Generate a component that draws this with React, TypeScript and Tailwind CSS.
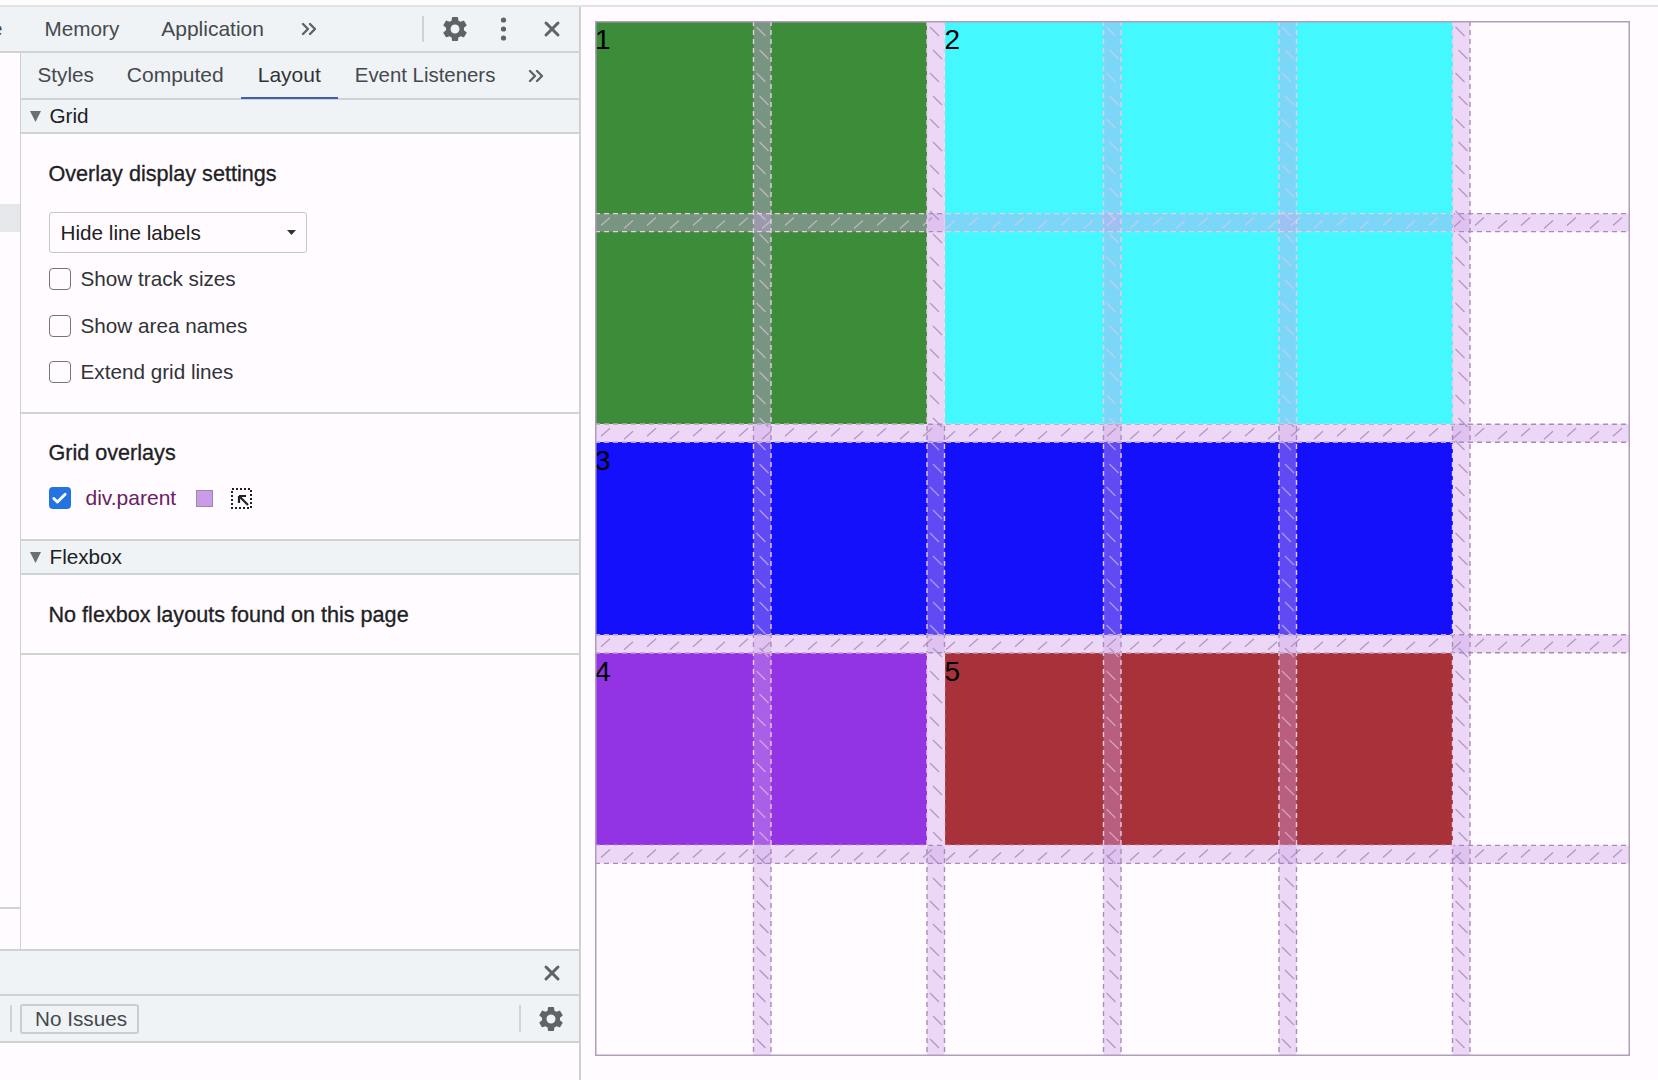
import React from 'react';
import { Check, ChevronsRight, X } from 'lucide-react';
import { MdSettings } from 'react-icons/md';

// track starts measured off the screenshot, the columns aren't quite even
const colGaps = [158.5, 332, 508.5, 684, 857.5];
const GAP_W = 17.5;
const ROW = (1035 - 18 * 4) / 5;
const rowGaps = [1, 2, 3, 4].map((i) => i * ROW + (i - 1) * 18);
const steps = Array.from({ length: 45 }, (_, i) => 6 + i * 23);

// the same rectangles as the grid items below
const itemRects = [
  { x: 0, y: 0, w: 332, h: rowGaps[1] },
  { x: 349.5, y: 0, w: 508, h: rowGaps[1] },
  { x: 0, y: rowGaps[1] + 18, w: 857.5, h: ROW },
  { x: 0, y: rowGaps[2] + 18, w: 332, h: ROW },
  { x: 349.5, y: rowGaps[2] + 18, w: 508, h: ROW },
];

const Marks = ({ color, hatchOpacity }: { color: string; hatchOpacity: number }) => (
  <g stroke={color}>
    <g strokeWidth={1.3} strokeOpacity={hatchOpacity}>
      {colGaps.map((x) =>
        steps.map((s, i) => (
          <line key={`${x}-${s}`} x1={x + (i % 2 ? 6 : 3)} y1={s} x2={x + (i % 2 ? 15 : 12)} y2={s + 9} />
        )),
      )}
      {rowGaps.map((y) =>
        steps.map((s, i) => (
          <line key={`${y}-${s}`} x1={s} y1={y + (i % 2 ? 15 : 12)} x2={s + 9} y2={y + (i % 2 ? 7 : 4)} />
        )),
      )}
    </g>
    <g strokeWidth={1.4} strokeDasharray="5 4">
      {colGaps.map((x) => (
        <g key={x}>
          <line x1={x} y1={0} x2={x} y2={1035} />
          <line x1={x + GAP_W} y1={0} x2={x + GAP_W} y2={1035} />
        </g>
      ))}
      {rowGaps.map((y) => (
        <g key={y}>
          <line x1={0} y1={y} x2={1035} y2={y} />
          <line x1={0} y1={y + 18} x2={1035} y2={y + 18} />
        </g>
      ))}
    </g>
  </g>
);

const GridOverlay = () => (
  <svg className="absolute inset-0 w-full h-full pointer-events-none" viewBox="0 0 1035 1035" fill="none">
    <defs>
      <clipPath id="items">
        {itemRects.map((r) => (
          <rect key={`${r.x}-${r.y}`} x={r.x - 1.5} y={r.y} width={r.w + 3} height={r.h} />
        ))}
      </clipPath>
      <clipPath id="page">
        <path
          clipRule="evenodd"
          d={`M0 0H1035V1035H0Z ${itemRects
            .map((r) => `M${r.x - 1.5} ${r.y}h${r.w + 3}v${r.h}h-${r.w + 3}Z`)
            .join(' ')}`}
        />
      </clipPath>
    </defs>
    {colGaps.map((x) => (
      <rect key={x} x={x} y={0} width={GAP_W} height={1035} fill="#d0a3eb" fillOpacity={0.4} />
    ))}
    {rowGaps.map((y) => (
      <rect key={y} x={0} y={y} width={1035} height={18} fill="#d0a3eb" fillOpacity={0.4} />
    ))}
    {/* marks read dark on the white page and light on the coloured items */}
    <g clipPath="url(#page)">
      <Marks color="#a78cb8" hatchOpacity={0.85} />
    </g>
    <g clipPath="url(#items)">
      <Marks color="#eccbe6" hatchOpacity={0.6} />
    </g>
    <rect x={0.75} y={0.75} width={1033.5} height={1033.5} stroke="#b09cbc" strokeWidth={1.5} />
  </svg>
);

const Tab = ({ label, active, className = '' }: { label: string; active?: boolean; className?: string }) => (
  <div className={`h-[46px] px-[17px] flex items-center border-b-2 ${active ? 'border-[#3f5fb5] text-[#303338]' : 'border-transparent text-[#45494d]'} ${className}`}>
    {label}
  </div>
);

const SectionHeader = ({ label }: { label: string }) => (
  <div className="h-[34px] shrink-0 bg-[#eff3f5] border-b-2 border-[#cfd2d6] flex items-center pl-[9px] gap-[9px] text-[#202124]">
    <svg width="11" height="11" viewBox="0 0 11 11">
      <path d="M0 0h11L5.5 11z" fill="#6b6f73" />
    </svg>
    <span className="-mt-[1px]">{label}</span>
  </div>
);

const CheckRow = ({ label, className }: { label: string; className: string }) => (
  <div className={`flex items-center h-[22px] ${className}`}>
    <div className="w-[22px] h-[22px] rounded-[4px] border-[1.5px] border-[#73777b] bg-[#fffbfe]" />
    <span className="ml-[10px] text-[#303338]">{label}</span>
  </div>
);

const Heading = ({ children }: { children: React.ReactNode }) => (
  <div className="h-[24px] leading-[24px] text-[21.6px] text-[#202124] [-webkit-text-stroke:0.3px]">{children}</div>
);

export default function App() {
  return (
    <div className="w-[1658px] h-[1080px] flex flex-col bg-[#fffbfe] overflow-hidden font-['Liberation_Sans',sans-serif] text-[20.7px]">
      <div className="h-[7px] shrink-0 bg-[#fefdfe] border-b-2 border-[#e3e1e7]" />
      <div className="flex-1 min-h-0 flex">
        {/* devtools panel */}
        <div className="w-[581px] shrink-0 flex flex-col border-r-2 border-[#cfd0d4]">
          <div className="h-[46px] shrink-0 bg-[#eff3f5] border-b-2 border-[#cfd2d6] flex items-center pr-[15px] text-[#45494d] overflow-hidden">
            <span className="-ml-[9px]">e</span>
            <span className="ml-[42px]">Memory</span>
            <span className="ml-[42px] text-[21px]">Application</span>
            <ChevronsRight className="ml-[33px] text-[#5f6368]" size={24} strokeWidth={2.4} />
            <div className="ml-auto w-[2px] h-[26px] bg-[#cfd2d6]" />
            <MdSettings className="ml-[16px] text-[#5f6368]" size={30} />
            <svg className="ml-[30px]" width="7" height="24" viewBox="0 0 7 24">
              <circle cx="3.5" cy="3" r="2.6" fill="#5f6368" />
              <circle cx="3.5" cy="12" r="2.6" fill="#5f6368" />
              <circle cx="3.5" cy="21" r="2.6" fill="#5f6368" />
            </svg>
            <X className="ml-[33px] text-[#5f6368]" size={24} strokeWidth={3} />
          </div>

          <div className="flex-1 min-h-0 flex">
            <div className="w-[20.5px] shrink-0 border-r-[1.5px] border-[#cfd0d4]">
              <div className="mt-[151px] h-[28px] bg-[#e6e7ea]" />
              <div className="mt-[675px] border-t-2 border-[#cfd2d6]" />
            </div>
            <div className="flex-1 min-w-0 flex flex-col">
              <div className="h-[47px] shrink-0 bg-[#eff3f5] border-b-2 border-[#cfd2d6] flex items-start">
                <Tab label="Styles" />
                <Tab label="Computed" className="-ml-[1px] text-[21px]" />
                <Tab label="Layout" active className="text-[21px]" />
                <Tab label="Event Listeners" className="text-[20.4px]" />
                <ChevronsRight className="ml-[12px] mt-[11px] text-[#5f6368]" size={24} strokeWidth={2.4} />
              </div>
              <SectionHeader label="Grid" />
              <div className="h-[280px] shrink-0 border-b-2 border-[#cfd2d6] pt-[28px] pl-[28px]">
                <Heading>Overlay display settings</Heading>
                <div className="mt-[26px] w-[258px] h-[41px] rounded-[3px] border-[1.5px] border-[#c4c6ca] flex items-center pl-[11px] pr-[10px] justify-between text-[#202124]">
                  <span>Hide line labels</span>
                  <svg width="9" height="5" viewBox="0 0 9 5">
                    <path d="M0 0h9L4.5 5z" fill="#303338" />
                  </svg>
                </div>
                <CheckRow label="Show track sizes" className="mt-[15px]" />
                <CheckRow label="Show area names" className="mt-[25px]" />
                <CheckRow label="Extend grid lines" className="mt-[24px]" />
              </div>
              <div className="h-[127px] shrink-0 border-b-2 border-[#cfd2d6] pt-[27px] pl-[28px]">
                <Heading>Grid overlays</Heading>
                <div className="mt-[22px] flex items-center h-[22px]">
                  <div className="w-[22px] h-[22px] rounded-[4px] bg-[#2374e1] flex items-center justify-center">
                    <Check className="text-white" size={17} strokeWidth={4} />
                  </div>
                  <span className="ml-[15px] text-[21px] text-[#6b2060]">div.parent</span>
                  <div className="ml-[20px] w-[17px] h-[17px] bg-[#c99be8] border border-[#9a8aa5]" />
                  <svg className="ml-[18px]" width="21" height="21" viewBox="0 0 21 21" fill="none">
                    <rect x="1" y="1" width="19" height="19" stroke="#202124" strokeWidth="2" strokeDasharray="2 2" />
                    <path d="M8 8h7M8 8v7M8 8l9 9" stroke="#202124" strokeWidth="2.2" />
                  </svg>
                </div>
              </div>
              <SectionHeader label="Flexbox" />
              <div className="h-[80px] shrink-0 border-b-2 border-[#cfd2d6] pt-[28px] pl-[28px]">
                <Heading>No flexbox layouts found on this page</Heading>
              </div>
            </div>
          </div>

          <div className="h-[47px] shrink-0 bg-[#eff3f5] border-y-2 border-[#cfd2d6] flex items-center justify-end pr-[15px]">
            <X className="text-[#5f6368]" size={24} strokeWidth={3} />
          </div>
          <div className="h-[47px] shrink-0 bg-[#eff3f5] border-b-2 border-[#cfd2d6] flex items-center pl-[10px] pr-[13px]">
            <div className="w-[2px] h-[27px] bg-[#cfd2d6]" />
            <div className="ml-[8px] w-[119px] h-[30px] rounded-[3px] border-2 border-[#c9cdd1] flex items-center justify-center pl-[3px] text-[#45494d]">
              No Issues
            </div>
            <div className="ml-auto w-[2px] h-[27px] bg-[#cfd2d6]" />
            <MdSettings className="ml-[15px] text-[#5f6368]" size={30} />
          </div>
          <div className="h-[37px] shrink-0" />
        </div>

        {/* page with the inspected grid */}
        <div className="flex-1 min-w-0 pl-[14px] pt-[14px]">
          <div className="relative w-[1035px] h-[1035px] grid grid-cols-[158.5px_156px_159px_158px_156px_160px] grid-rows-5 gap-x-[17.5px] gap-y-[18px] text-[28px] leading-[38px] text-black">
            <div className="col-span-2 row-span-2 bg-[#3c8c3a]">1</div>
            <div className="col-span-3 row-span-2 bg-[#43f8ff]">2</div>
            <div className="col-span-5 bg-[#1410fb]">3</div>
            <div className="col-span-2 bg-[#9234e3]">4</div>
            <div className="col-span-3 bg-[#a8323a]">5</div>
            <GridOverlay />
          </div>
        </div>
      </div>
    </div>
  );
}
